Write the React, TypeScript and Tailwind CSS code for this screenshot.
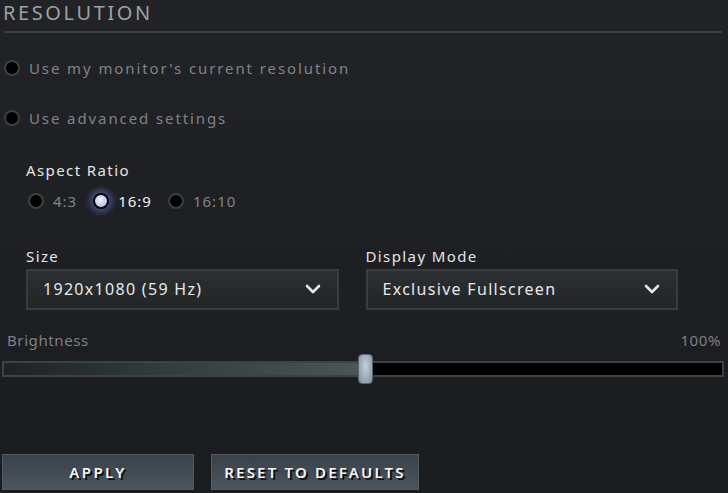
import { ChevronDown } from "lucide-react";

const font = { fontFamily: '"Noto Sans", "Open Sans", sans-serif' };

function Radio({ checked, label, small }: { checked?: boolean; label: string; small?: boolean }) {
  return (
    <div className="flex items-center">
      <div
        className={
          checked
            ? "shrink-0 w-[16px] h-[16px] rounded-full border-2 border-[#0b0c10] bg-[radial-gradient(circle_at_45%_40%,#f2f4ff,#a9b2d6)] shadow-[0_0_6px_3px_rgba(110,120,230,0.55)]"
            : "shrink-0 w-[16px] h-[16px] rounded-full border-2 border-[#3a4140] bg-black"
        }
      />
      <span
        className={
          (small ? "ml-[9px] text-[15px] tracking-[1px] " : "ml-[9px] text-[15px] tracking-[1.9px] ") +
          (checked ? "text-[#f2f2f2]" : "text-[#7f8487]")
        }
      >
        {label}
      </span>
    </div>
  );
}

function Select({ value }: { value: string }) {
  return (
    <div className="h-[41px] flex items-center justify-between pl-[15px] pr-[12px] border-2 border-[#383e3f] bg-gradient-to-b from-[#2c3032] to-[#222526]">
      <span className="text-[16px] tracking-[1.3px] text-[#e6e8e8]">{value}</span>
      <ChevronDown className="w-[24px] h-[24px] text-[#e6e8e8]" strokeWidth={2.6} />
    </div>
  );
}

export default function App() {
  return (
    <div
      className="w-[728px] h-[493px] overflow-hidden bg-gradient-to-b from-[#222327] to-[#1b1c1f] flex flex-col"
      style={font}
    >
      <div className="px-[3px] pt-[1px] h-[31px] flex items-start">
        <h1 className="text-[20px] leading-[23px] tracking-[2.6px] text-[#9ea2a5]">RESOLUTION</h1>
      </div>
      <div className="mx-[4px] mr-[6px] h-[2px] bg-[#3c4044]" />

      <div className="pl-[4px] mt-[24px]">
        <Radio label="Use my monitor's current resolution" />
      </div>
      <div className="pl-[4px] mt-[27px]">
        <Radio label="Use advanced settings" />
      </div>

      <div className="pl-[26px] mt-[30px] text-[15px] tracking-[1.4px] text-[#e4e4e4]">Aspect Ratio</div>
      <div className="pl-[28px] mt-[8px] flex items-center gap-[16px]">
        <Radio small label="4:3" />
        <Radio small checked label="16:9" />
        <Radio small label="16:10" />
      </div>

      <div className="pl-[26px] pr-[50px] mt-[33px] grid grid-cols-2 gap-[27px]">
        <div>
          <div className="text-[15px] tracking-[1.4px] text-[#e4e4e4] mb-[1px]">Size</div>
          <Select value="1920x1080 (59 Hz)" />
        </div>
        <div>
          <div className="text-[15px] tracking-[1.4px] text-[#e4e4e4] mb-[1px]">Display Mode</div>
          <Select value="Exclusive Fullscreen" />
        </div>
      </div>

      <div className="px-[7px] mt-[19px] flex justify-between text-[15px] tracking-[0.6px] text-[#7c8083]">
        <span>Brightness</span>
        <span>100%</span>
      </div>
      <div className="relative mx-[2px] mr-[4px] mt-[10px] h-[16px] border-2 border-[#3b4443] bg-black flex">
        <div className="w-[358px] h-full bg-gradient-to-r from-[#1e2322] via-[#34403f] to-[#4a5657]" />
        <div className="absolute left-[354px] top-[-9px] w-[15px] h-[30px] rounded-[4px] bg-[radial-gradient(ellipse_at_50%_40%,#c4d0dc,#7f8d9a)] border border-[#5a6570]" />
      </div>

      <div className="flex gap-[17px] pl-[2px] mt-[77px]">
        <button className="w-[192px] h-[36px] border border-[#525b62] bg-gradient-to-b from-[#3a4249] to-[#4b555e] text-[15px] font-semibold tracking-[2.4px] text-[#f4f4f4] [text-shadow:2px_2px_0_#111]">
          APPLY
        </button>
        <button className="w-[208px] h-[36px] border border-[#525b62] bg-gradient-to-b from-[#3a4249] to-[#4b555e] text-[15px] font-semibold tracking-[2.2px] text-[#f4f4f4] [text-shadow:2px_2px_0_#111]">
          RESET TO DEFAULTS
        </button>
      </div>
    </div>
  );
}
